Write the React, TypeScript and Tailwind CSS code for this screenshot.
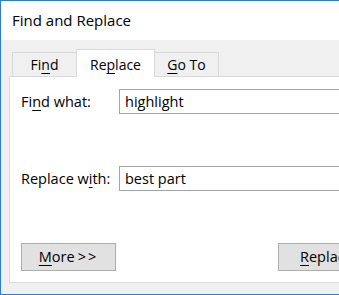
const Ul = ({ children }: { children: string }) => (
  <span className="underline underline-offset-[3px] decoration-1">{children}</span>
);

const App = () => {
  return (
    <div
      className="w-[339px] h-[295px] overflow-hidden flex flex-col border-t border-l border-b border-[#2f7bd6] bg-[#f0f0f0] text-black"
      style={{ fontFamily: '"Open Sans", "Noto Sans", sans-serif' }}
    >
      {/* title bar */}
      <div className="h-[39px] shrink-0 bg-white flex items-center pl-[11px] text-[15px]">
        Find and Replace
      </div>

      <div className="flex-1 flex flex-col pl-[8px] pt-[9px] pb-[11px]">
        {/* tabs */}
        <div className="flex items-end h-[27px] pl-[3px] text-[14px]">
          <div className="w-[64px] h-[24px] border-t border-l border-[#d9d9d9] flex items-center justify-center">
            Fi<Ul>n</Ul>d
          </div>
          <div className="relative z-10 w-[79px] h-[28px] -mb-px bg-white border-t border-l border-r border-[#d9d9d9] flex items-center justify-center pt-[2px]">
            Re<Ul>p</Ul>lace
          </div>
          <div className="w-[64px] h-[24px] border-t border-r border-[#d9d9d9] flex items-center justify-center">
            <Ul>G</Ul>o To
          </div>
        </div>

        {/* panel */}
        <div className="flex-1 w-[360px] bg-white border border-[#d9d9d9] flex flex-col pl-[11px] pt-[12px] text-[14.5px]">
          <div className="flex items-center h-[25px]">
            <div className="w-[98px]">
              Fi<Ul>n</Ul>d what:
            </div>
            <div className="w-[240px] h-[25px] border border-[#a5a5a5] flex items-center pl-[5px]">
              highlight
            </div>
          </div>

          <div className="flex items-center h-[25px] mt-[52px]">
            <div className="w-[98px]">
              Replace w<Ul>i</Ul>th:
            </div>
            <div className="w-[240px] h-[25px] border border-[#a5a5a5] flex items-center pl-[5px]">
              best part
            </div>
          </div>

          <div className="flex items-center mt-[52px]">
            <div className="w-[95px] h-[28px] shrink-0 bg-[#e1e1e1] border border-[#adadad] flex items-center justify-center">
              <Ul>M</Ul>ore <span className="tracking-[2px] ml-[3px]">&gt;&gt;</span>
            </div>
            <div className="w-[95px] h-[28px] shrink-0 ml-[162px] bg-[#e1e1e1] border border-[#adadad] flex items-center pl-[21px]">
              <Ul>R</Ul>eplace
            </div>
          </div>
        </div>
      </div>
    </div>
  );
};

export default App;
